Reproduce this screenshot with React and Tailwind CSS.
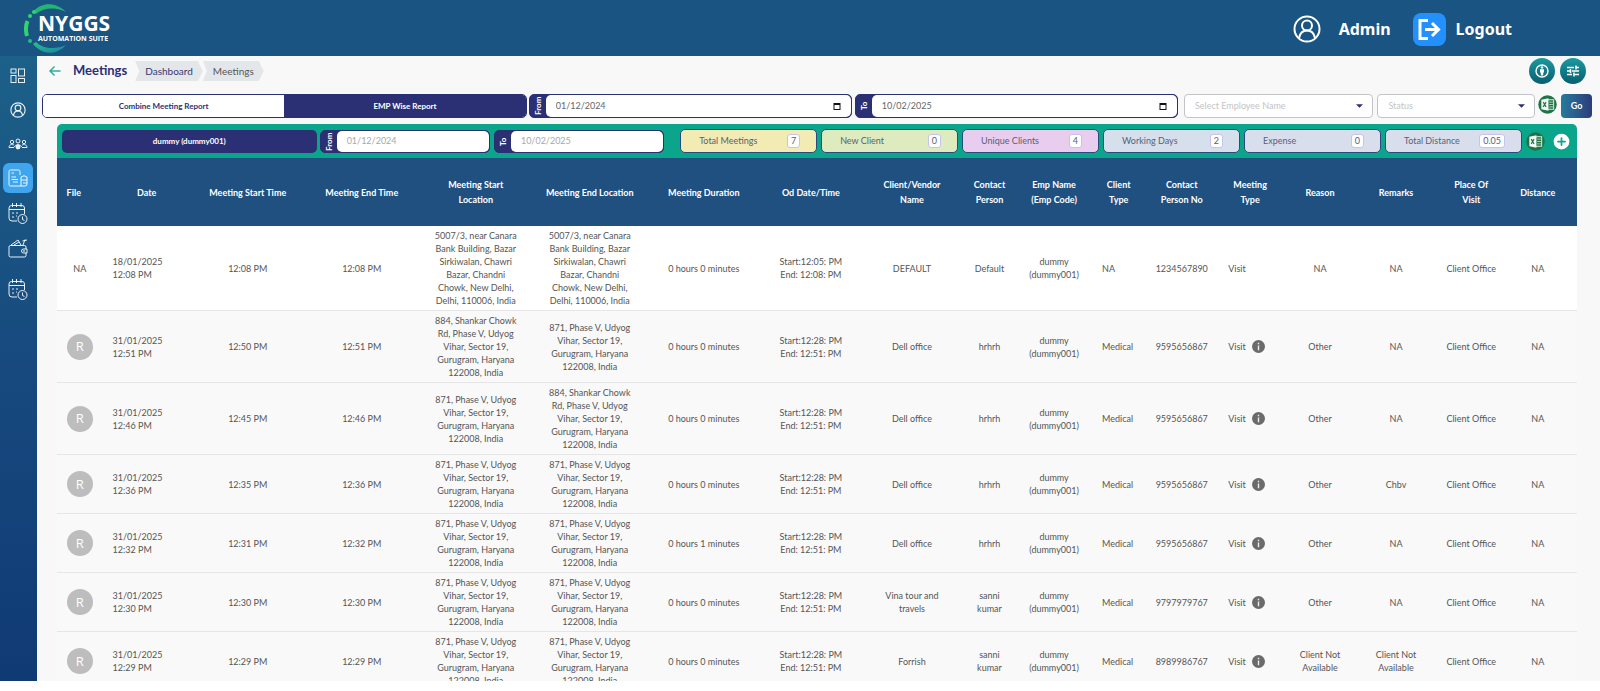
import { CirclePlus } from "lucide-react";

const columns = [
  { label: "File", width: "w-[3%]", head: "pr-3" },
  { label: "Date", width: "w-[5.8%]" },
  { label: "Meeting Start Time", width: "w-[7.5%]" },
  { label: "Meeting End Time", width: "w-[7.5%]" },
  { label: "Meeting Start Location", width: "w-[7.5%]", head: "px-4" },
  { label: "Meeting End Location", width: "w-[7.5%]" },
  { label: "Meeting Duration", width: "w-[7.5%]" },
  { label: "Od Date/Time", width: "w-[6.6%]" },
  { label: "Client/Vendor Name", width: "w-[6.7%]", head: "px-4" },
  { label: "Contact Person", width: "w-[3.5%]" },
  { label: "Emp Name (Emp Code)", width: "w-[5%]", head: "px-2" },
  { label: "Client Type", width: "w-[3.5%]", head: "px-2" },
  { label: "Contact Person No", width: "w-[4.8%]", head: "px-2" },
  { label: "Meeting Type", width: "w-[4.2%]", head: "px-2" },
  { label: "Reason", width: "w-[5%]" },
  { label: "Remarks", width: "w-[5%]" },
  { label: "Place Of Visit", width: "w-[4.9%]", head: "px-4" },
  { label: "Distance", width: "w-[4.5%]", head: "pr-2.5" },
];

const BAZAR = [
  "5007/3, near Canara",
  "Bank Building, Bazar",
  "Sirkiwalan, Chawri",
  "Bazar, Chandni",
  "Chowk, New Delhi,",
  "Delhi, 110006, India",
];
const CHOWK = [
  "884, Shankar Chowk",
  "Rd, Phase V, Udyog",
  "Vihar, Sector 19,",
  "Gurugram, Haryana",
  "122008, India",
];
const PHASE = [
  "871, Phase V, Udyog",
  "Vihar, Sector 19,",
  "Gurugram, Haryana",
  "122008, India",
];

const base = {
  file: true,
  date: "31/01/2025",
  from: PHASE,
  to: PHASE,
  duration: "0 hours 0 minutes",
  od: ["Start:12:28: PM", "End: 12:51: PM"],
  client: ["Dell office"],
  contact: ["hrhrh"],
  type: "Medical",
  phone: "9595656867",
  reason: ["Other"],
  remarks: ["NA"],
};

const meetings = [
  {
    ...base,
    file: false,
    date: "18/01/2025",
    start: "12:08 PM",
    end: "12:08 PM",
    from: BAZAR,
    to: BAZAR,
    od: ["Start:12:05: PM", "End: 12:08: PM"],
    client: ["DEFAULT"],
    contact: ["Default"],
    type: "NA",
    phone: "1234567890",
    reason: ["NA"],
  },
  { ...base, start: "12:50 PM", end: "12:51 PM", from: CHOWK },
  { ...base, start: "12:45 PM", end: "12:46 PM", to: CHOWK },
  { ...base, start: "12:35 PM", end: "12:36 PM", remarks: ["Chbv"] },
  { ...base, start: "12:31 PM", end: "12:32 PM", duration: "0 hours 1 minutes" },
  {
    ...base,
    start: "12:30 PM",
    end: "12:30 PM",
    client: ["Vina tour and", "travels"],
    contact: ["sanni", "kumar"],
    phone: "9797979767",
  },
  {
    ...base,
    start: "12:29 PM",
    end: "12:29 PM",
    client: ["Forrish"],
    contact: ["sanni", "kumar"],
    phone: "8989986767",
    reason: ["Client Not", "Available"],
    remarks: ["Client Not", "Available"],
  },
];

const stats = [
  { label: "Total Meetings", value: "7", color: "bg-[#f3ebb4]" },
  { label: "New Client", value: "0", color: "bg-[#deebbf]" },
  { label: "Unique Clients", value: "4", color: "bg-[#e8cdee]" },
  { label: "Working Days", value: "2", color: "bg-[#d6dfec]" },
  { label: "Expense", value: "0", color: "bg-[#d9deec]" },
  { label: "Total Distance", value: "0.05", color: "bg-[#d9deec]" },
];

function Logo() {
  return (
    <div className="relative flex h-14 w-24 flex-col justify-center pl-3.5 text-white">
      <svg viewBox="0 0 50 50" className="absolute left-0 top-1 size-[50px]" fill="none">
        <defs>
          <linearGradient id="ring" x1="0" y1="0" x2="1" y2="1">
            <stop offset="0" stopColor="#2ac487" />
            <stop offset="1" stopColor="#1580a8" />
          </linearGradient>
        </defs>
        <path d="M10 7C18 -2 32 -2 42 8C33 3 20 3 12 10Z" fill="#22b573" />
        <circle cx="10" cy="8" r="2" fill="#2fd36f" />
        <circle cx="6" cy="12" r="2" fill="#2fd36f" />
        <path d="M3.500 17C1.500 22 1.500 27 3 32" stroke="#2fd36f" strokeWidth="4" />
        <circle cx="6" cy="37" r="2" fill="#22c07a" />
        <path d="M9 40C18 51 32 52 42 41C33 45 20 46 12 38Z" fill="url(#ring)" />
      </svg>
      <span className="relative font-['Open_Sans',sans-serif] text-[21px] font-bold leading-[21px]">
        NYGGS
      </span>
      <span className="relative whitespace-nowrap font-['Open_Sans',sans-serif] text-[7px] font-bold leading-[9px]">
        AUTOMATION SUITE
      </span>
    </div>
  );
}

function GridIcon() {
  return (
    <svg viewBox="0 0 16 16" className="size-4" fill="none" stroke="currentColor">
      <rect x="1" y="1" width="5" height="4" />
      <rect x="8.500" y="1" width="6" height="7" />
      <rect x="1" y="7.500" width="5" height="7" />
      <rect x="8.500" y="10.500" width="6" height="4" />
    </svg>
  );
}

function PersonIcon({ className }) {
  return (
    <svg viewBox="0 0 28 28" className={className} fill="none" stroke="currentColor" strokeWidth="2">
      <circle cx="14" cy="14" r="12.500" />
      <circle cx="14" cy="10.500" r="5" />
      <path d="M6 23C7 18 10 15.500 14 15.500S21 18 22 23" />
    </svg>
  );
}

function TeamIcon() {
  return (
    <svg viewBox="0 0 20 12" className="h-3 w-5" fill="none" stroke="currentColor">
      <circle cx="10" cy="3" r="2" />
      <circle cx="4" cy="4" r="1.700" />
      <circle cx="16" cy="4" r="1.700" />
      <path d="M6.500 9C6.500 6 13.500 6 13.500 9M1 9.500C1 6.500 4 6 6 7M19 9.500C19 6.500 16 6 14 7M1 9.500H6M14 9.500H19" />
      <circle cx="10" cy="9" r="2" fill="currentColor" />
    </svg>
  );
}

function ReportIcon() {
  return (
    <svg viewBox="0 0 20 18" className="h-[18px] w-5" fill="none" stroke="currentColor">
      <path d="M12 6V2.500Q12 1 10.500 1H2.500Q1 1 1 2.500V15.500Q1 17 2.500 17H13" />
      <path d="M3.500 4H6M3.500 8H8M3.500 10.500H10M5 13H10" />
      <path d="M13 17V8Q16 5.500 19 8V15Q19 17 17 17H13M13 11H19M15 14H19" />
    </svg>
  );
}

function CalendarIcon() {
  return (
    <svg viewBox="0 0 20 21" className="h-[21px] w-5" fill="none" stroke="currentColor">
      <path d="M9 18H4Q1 18 1 15V5Q1 2.500 3.500 2.500H14Q16.500 2.500 16.500 5V11M1 6.500H16.500" />
      <path d="M4.500 0V4M8.500 0V4M13 0V4" />
      <path d="M4 10H6M8 10H10M4 14H6M8 13H9" />
      <circle cx="14.500" cy="16" r="4.500" />
      <path d="M14.500 13.500V16.500L16.500 17.500" />
    </svg>
  );
}

function WalletIcon() {
  return (
    <svg viewBox="0 0 20 20" className="size-5" fill="none" stroke="currentColor">
      <path d="M18 11V9Q18 7.500 16.500 7.500H2.500Q1 7.500 1 9V17.500Q1 19 2.500 19H16.500Q18 19 18 17.500V15" />
      <path d="M3 7L10 2L13 7M6 7L11 4M15 7L17 1.500M14.500 3L19 2" />
      <path d="M19 11H15.500Q13.500 11 13.500 13T15.500 15H19Z" />
      <circle cx="16" cy="13" r="0.500" />
    </svg>
  );
}

function ExcelIcon() {
  return (
    <svg viewBox="0 0 20 20" className="size-[19px] shrink-0">
      <circle cx="10" cy="10" r="9.700" fill="#1f7346" />
      <rect x="10" y="5" width="6.500" height="10" fill="#1f7346" stroke="#e6f3ea" />
      <path d="M12 7.500H15.500M12 10H15.500M12 12.500H15.500" stroke="#e6f3ea" strokeDasharray="1.500 0.500" />
      <path d="M3.500 5L11 3.500V16.500L3.500 15Z" fill="#f2f8f4" />
      <path d="M5.500 7.500L8.500 12.500M8.500 7.500L5.500 12.500" stroke="#1f7346" strokeWidth="1.200" />
    </svg>
  );
}

function InfoIcon() {
  return (
    <svg viewBox="0 0 14 14" className="size-[13px]">
      <circle cx="7" cy="7" r="7" fill="#6b6b6b" />
      <path d="M7 3V4.600M7 6V11" stroke="#eee" strokeWidth="1.500" />
    </svg>
  );
}

function CalendarGlyph() {
  return (
    <svg viewBox="0 0 8 8" className="h-2 w-2 shrink-0" fill="none" stroke="#111">
      <rect x="1" y="1.500" width="6" height="6" />
      <path d="M1 2H7" strokeWidth="2" />
    </svg>
  );
}

function Header() {
  return (
    <header className="flex h-14 shrink-0 items-center justify-between bg-[#1a5482] pl-6 pr-[88px] font-['Noto_Sans',sans-serif] text-white">
      <Logo />
      <div className="flex items-center pt-0.5">
        <PersonIcon className="size-7" />
        <span className="ml-[18px] text-base font-bold">Admin</span>
        <button type="button" className="ml-[22px] flex items-center gap-2.5 text-base font-bold">
          <svg viewBox="0 0 33 33" className="size-[33px]" fill="none" stroke="white" strokeWidth="3">
            <rect width="33" height="33" rx="8" fill="#2490fd" stroke="none" />
            <path d="M15 7.500H7V25.500H15M12 16.500H25M19 10L25.500 16.500L19 23" />
          </svg>
          Logout
        </button>
      </div>
    </header>
  );
}

function Sidebar() {
  return (
    <nav className="flex w-[37px] shrink-0 flex-col items-center bg-linear-to-b from-[#1c6189] via-[#17497e] to-[#103a74] pr-px pt-3 text-white/90">
      <a href="#dashboard" aria-label="Dashboard"><GridIcon /></a>
      <a href="#profile" aria-label="Profile" className="mt-[18px]">
        <PersonIcon className="size-4" />
      </a>
      <a href="#team" aria-label="Team" className="mt-5"><TeamIcon /></a>
      <a
        href="#meetings"
        aria-label="Meetings"
        className="mt-[13px] flex h-[30px] w-[30px] items-center justify-center rounded-md bg-[#3fa5ef]"
      >
        <ReportIcon />
      </a>
      <a href="#attendance" aria-label="Attendance" className="mt-2.5"><CalendarIcon /></a>
      <a href="#expenses" aria-label="Expenses" className="mt-3.5"><WalletIcon /></a>
      <a href="#schedule" aria-label="Schedule" className="mt-[21px]"><CalendarIcon /></a>
    </nav>
  );
}

function RoundButton({ label, children }) {
  return (
    <button
      type="button"
      aria-label={label}
      className="flex size-[26px] items-center justify-center rounded-full bg-linear-to-b from-[#1c9aa0] to-[#085f70] text-white"
    >
      {children}
    </button>
  );
}

function TitleBar() {
  return (
    <div className="flex h-[30px] items-center pl-3 pr-3.5">
      <button type="button" aria-label="Back" className="text-[#2fae9c]">
        <svg viewBox="0 0 12 12" className="size-3" fill="none" stroke="currentColor" strokeWidth="1.500">
          <path d="M11.500 6H1M5.500 1.500L1 6L5.500 10.500" />
        </svg>
      </button>
      <h1 className="ml-3 text-[13px] font-bold text-[#2b2f75]">Meetings</h1>
      <div className="ml-2 flex h-5 text-[10px] leading-5">
        <a
          href="#dashboard"
          className="bg-[#e4e7ea] px-2.5 text-[#34386f] [clip-path:polygon(0_0,calc(100%-5px)_0,100%_50%,calc(100%-5px)_100%,0_100%,4px_50%)]"
        >
          Dashboard
        </a>
        <a
          href="#meetings"
          className="bg-[#e4e7ea] px-2.5 text-[#555] [clip-path:polygon(0_0,calc(100%-5px)_0,100%_50%,calc(100%-5px)_100%,0_100%,4px_50%)]"
        >
          Meetings
        </a>
      </div>
      <div className="ml-auto flex gap-[5px]">
        <RoundButton label="Guide">
          <svg viewBox="0 0 14 14" className="size-3.5" fill="none" stroke="currentColor" strokeWidth="1.400">
            <circle cx="7" cy="7" r="6" />
            <circle cx="7" cy="3.500" r="1.200" fill="currentColor" stroke="none" />
            <path d="M5 5.200H9V8.500H8.200V11.500H5.800V8.500H5Z" fill="currentColor" stroke="none" />
          </svg>
        </RoundButton>
        <RoundButton label="Filters">
          <svg viewBox="0 0 14 14" className="size-3.5" fill="none" stroke="currentColor" strokeWidth="1.500">
            <path d="M1 3.500H8M10 3.500H13M10 1.500V5.500M1 7H4M6 7H13M4.500 5V9M1 10.500H6M8 10.500H13M8 8.500V12.500" />
          </svg>
        </RoundButton>
      </div>
    </div>
  );
}

function DateField({ id, label, value, muted }) {
  return (
    <div className="flex h-full min-w-0 flex-1 rounded-[5px] border border-[#2b3074] bg-[#2b3074]">
      <label
        htmlFor={id}
        className="flex w-4 shrink-0 rotate-180 items-center justify-center text-[8px] font-bold leading-none text-white [writing-mode:vertical-rl]"
      >
        {label}
      </label>
      <div className="flex min-w-0 flex-1 items-center rounded-[5px] bg-white px-2.5">
        <input
          id={id}
          type="text"
          defaultValue={value}
          disabled={muted}
          className={`w-full min-w-0 text-[9px] outline-none ${muted ? "text-[#a8a8a8]" : "text-[#666]"}`}
        />
        {!muted && <CalendarGlyph />}
      </div>
    </div>
  );
}

function SelectField({ label, className }) {
  return (
    <div className={`relative h-full min-w-0 ${className}`}>
      <select
        aria-label={label}
        className="block h-full w-full appearance-none rounded-[4px] border border-[#c4c4c8] bg-white px-2.5 text-[9px] text-[#c4c4c4]"
      >
        <option>{label}</option>
      </select>
      <svg viewBox="0 0 8 4" className="pointer-events-none absolute right-2.5 top-2.5 h-1 w-[7px]">
        <path d="M0 0H8L4 4Z" fill="#2b3074" />
      </svg>
    </div>
  );
}

function FilterBar() {
  return (
    <div className="mt-2 flex h-6 pl-[5px] pr-2">
      <div className="flex min-w-0 flex-[484] overflow-hidden rounded-[5px] border border-[#2b3074] text-[8px] font-bold">
        <button type="button" className="flex-1 bg-white text-[#2b3074]">
          Combine Meeting Report
        </button>
        <button type="button" className="flex-1 bg-[#2b3074] text-white">
          EMP Wise Report
        </button>
      </div>
      <div className="ml-0.5 flex min-w-0 flex-[651] gap-[3px]">
        <DateField id="report-from" label="From" value="01/12/2024" />
        <DateField id="report-to" label="To" value="10/02/2025" />
      </div>
      <SelectField label="Select Employee Name" className="ml-1.5 flex-[190]" />
      <SelectField label="Status" className="ml-1 flex-[158]" />
      <button type="button" aria-label="Export to Excel" className="ml-[3px] self-start pt-px">
        <ExcelIcon />
      </button>
      <button
        type="button"
        className="ml-1 w-[31px] rounded-[4px] bg-linear-to-r from-[#247a9c] to-[#2b3c7c] text-[9px] font-bold text-white"
      >
        Go
      </button>
    </div>
  );
}

function SummaryBar() {
  return (
    <div className="flex h-[34px] items-center rounded-t-[5px] bg-[#0aa58a] px-[5px]">
      <button
        type="button"
        className="h-[23px] min-w-0 flex-[255] rounded-[5px] bg-[#2b3074] text-[8px] font-bold text-white"
      >
        dummy (dummy001)
      </button>
      <div className="ml-[3px] flex h-[23px] min-w-0 flex-[345] gap-1">
        <DateField id="emp-from" label="From" value="01/12/2024" muted />
        <DateField id="emp-to" label="To" value="10/02/2025" muted />
      </div>
      <dl className="ml-4 flex min-w-0 flex-[843] gap-1">
        {stats.map((stat) => (
          <div
            key={stat.label}
            className={`flex h-6 min-w-0 flex-1 items-center justify-between whitespace-nowrap rounded-[5px] border border-[#2b4a80] pl-[18px] pr-4 text-[9px] text-[#5a5e74] ${stat.color}`}
          >
            <dt>{stat.label}</dt>
            <dd className="rounded-[3px] border border-[#c5c3ee] bg-white px-[3px] leading-3">
              {stat.value}
            </dd>
          </div>
        ))}
      </dl>
      <button type="button" aria-label="Export employee to Excel" className="ml-1">
        <ExcelIcon />
      </button>
      <button type="button" aria-label="Add meeting" className="ml-1.5">
        <CirclePlus className="size-[21px]" fill="white" stroke="#0aa58a" strokeWidth={2} />
      </button>
    </div>
  );
}

function Lines({ lines }) {
  return lines.map((line, index) => (
    <span key={index} className="block whitespace-nowrap">
      {line}
    </span>
  ));
}

function MeetingRow({ meeting }) {
  return (
    <tr className={`border-b border-[#e6e6e6] ${meeting.file ? "bg-[#f9f9f9]" : "bg-white"}`}>
      <td>
        {meeting.file ? (
          <span className="mx-auto flex size-[26px] items-center justify-center rounded-full bg-[#bdbdbd] font-['Open_Sans',sans-serif] text-[13px] text-white">
            R
          </span>
        ) : (
          "NA"
        )}
      </td>
      <td className="pl-2.5 text-left">
        <Lines lines={[meeting.date, meeting.end]} />
      </td>
      <td>{meeting.start}</td>
      <td>{meeting.end}</td>
      <td className="py-[3px]"><Lines lines={meeting.from} /></td>
      <td className="py-[3px]"><Lines lines={meeting.to} /></td>
      <td>{meeting.duration}</td>
      <td><Lines lines={meeting.od} /></td>
      <td><Lines lines={meeting.client} /></td>
      <td><Lines lines={meeting.contact} /></td>
      <td><Lines lines={["dummy", "(dummy001)"]} /></td>
      <td className="pl-2.5 text-left">{meeting.type}</td>
      <td>{meeting.phone}</td>
      <td className="pl-2.5">
        <span className="flex items-center gap-1.5">
          Visit
          {meeting.file && <InfoIcon />}
        </span>
      </td>
      <td><Lines lines={meeting.reason} /></td>
      <td><Lines lines={meeting.remarks} /></td>
      <td>Client Office</td>
      <td className="pr-2.5">NA</td>
    </tr>
  );
}

function MeetingTable() {
  return (
    <table className="w-full table-fixed border-collapse text-center text-[9px] leading-[13px] text-[#555]">
      <thead className="bg-[#1f5080] text-white">
        <tr className="h-[68px]">
          {columns.map((column) => (
            <th
              key={column.label}
              className={`text-[9px] font-bold leading-[15px] ${column.width} ${column.head ?? ""}`}
            >
              {column.label}
            </th>
          ))}
        </tr>
      </thead>
      <tbody>
        {meetings.map((meeting) => (
          <MeetingRow key={meeting.start} meeting={meeting} />
        ))}
      </tbody>
    </table>
  );
}

export default function App() {
  return (
    <div className="flex h-[calc(100vh-10px)] flex-col overflow-hidden font-[Lato,'Open_Sans',sans-serif]">
      <Header />
      <div className="flex min-h-0 flex-1">
        <Sidebar />
        <main className="min-w-0 flex-1 overflow-hidden bg-[#f8f8f9]">
          <TitleBar />
          <FilterBar />
          <section className="ml-5 mr-[23px] mt-1.5">
            <SummaryBar />
            <MeetingTable />
          </section>
        </main>
      </div>
    </div>
  );
}
